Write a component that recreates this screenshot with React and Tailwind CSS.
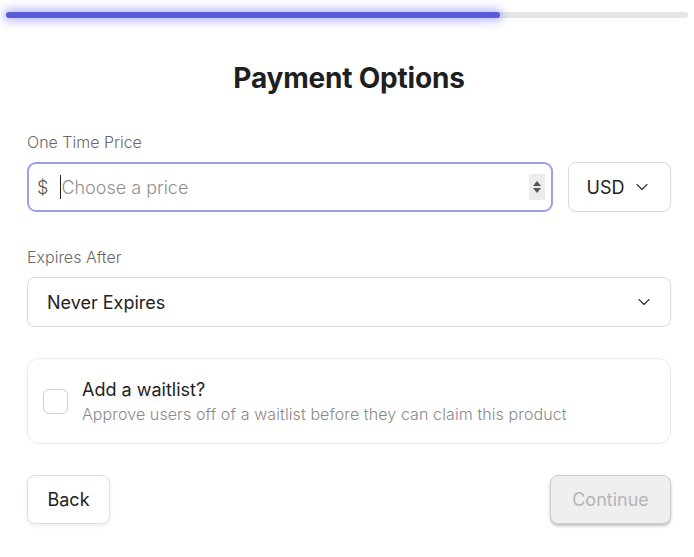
import { ChevronDown } from 'lucide-react'

export default function App() {
  return (
    <div className="w-[694px] h-[557px] bg-white text-[#1f1f1f]" style={{ fontFamily: 'Inter, "Noto Sans", sans-serif' }}>
      <div className="pt-[12px] pl-[6px] pr-[6px]">
        <div className="h-[6px] w-full rounded-full bg-[#e6e6e6]">
          <div className="h-full w-[494px] rounded-full bg-[#5a5bd8] shadow-[0_0_10px_3px_rgba(100,100,255,0.45)]" />
        </div>
      </div>

      <div className="w-[644px] ml-[27px]">
        <h1 className="mt-[43px] text-center text-[28px] font-bold leading-[34px] tracking-[-0.2px] text-[#1f1f1f]">Payment Options</h1>

        <div className="mt-[37px] text-[16px] leading-[20px] font-light text-[#6a6a6a]">One Time Price</div>
        <div className="mt-[10px] flex gap-[15px]">
          <div className="flex h-[50px] w-[526px] items-center rounded-[9px] border-2 border-[#9b9ff0] pl-[8px] pr-[4px]">
            <span className="text-[18px] font-light text-[#555]">$</span>
            <span className="ml-[12px] h-[24px] w-px bg-[#222]" />
            <span className="text-[18px] font-light text-[#8f8f8f]">Choose a price</span>
            <span className="ml-auto mr-[2px] flex h-[26px] w-[16px] flex-col items-center justify-center gap-[2px] bg-[#ececec]">
              <span className="h-0 w-0 border-x-[4px] border-b-[5px] border-x-transparent border-b-[#555]" />
              <span className="h-0 w-0 border-x-[4px] border-t-[5px] border-x-transparent border-t-[#555]" />
            </span>
          </div>
          <div className="flex h-[50px] w-[103px] items-center justify-center gap-[8px] rounded-[8px] border border-[#d9d9d9]">
            <span className="text-[18px] text-[#222]">USD</span>
            <ChevronDown className="h-[20px] w-[20px] text-[#333]" strokeWidth={1.4} />
          </div>
        </div>

        <div className="mt-[35px] text-[16px] leading-[20px] font-light text-[#6a6a6a]">Expires After</div>
        <div className="mt-[10px] flex h-[50px] items-center justify-between rounded-[8px] border border-[#d9d9d9] pl-[19px] pr-[16px]">
          <span className="text-[18px] text-[#222]">Never Expires</span>
          <ChevronDown className="h-[20px] w-[20px] text-[#333]" strokeWidth={1.4} />
        </div>

        <div className="mt-[31px] flex h-[86px] items-center gap-[14px] rounded-[12px] border border-[#ebebeb] pl-[15px]">
          <span className="h-[25px] w-[25px] rounded-[6px] border border-[#cfcfcf]" />
          <div>
            <div className="text-[18px] leading-[24px] text-[#222]">Add a waitlist?</div>
            <div className="mt-[2px] text-[16px] leading-[20px] font-light tracking-[0.1px] text-[#8a8a8a]">Approve users off of a waitlist before they can claim this product</div>
          </div>
        </div>

        <div className="mt-[31px] flex justify-between">
          <button className="h-[49px] w-[83px] rounded-[8px] border border-[#dedede] bg-white text-[18px] text-[#222] shadow-[0_2px_4px_rgba(0,0,0,0.08)]">Back</button>
          <button className="h-[49px] w-[121px] rounded-[8px] border border-[#cfcfcf] bg-[#efefef] text-[18px] text-[#b5b5b5] shadow-[0_2px_3px_rgba(0,0,0,0.25)]">Continue</button>
        </div>
      </div>
    </div>
  )
}
